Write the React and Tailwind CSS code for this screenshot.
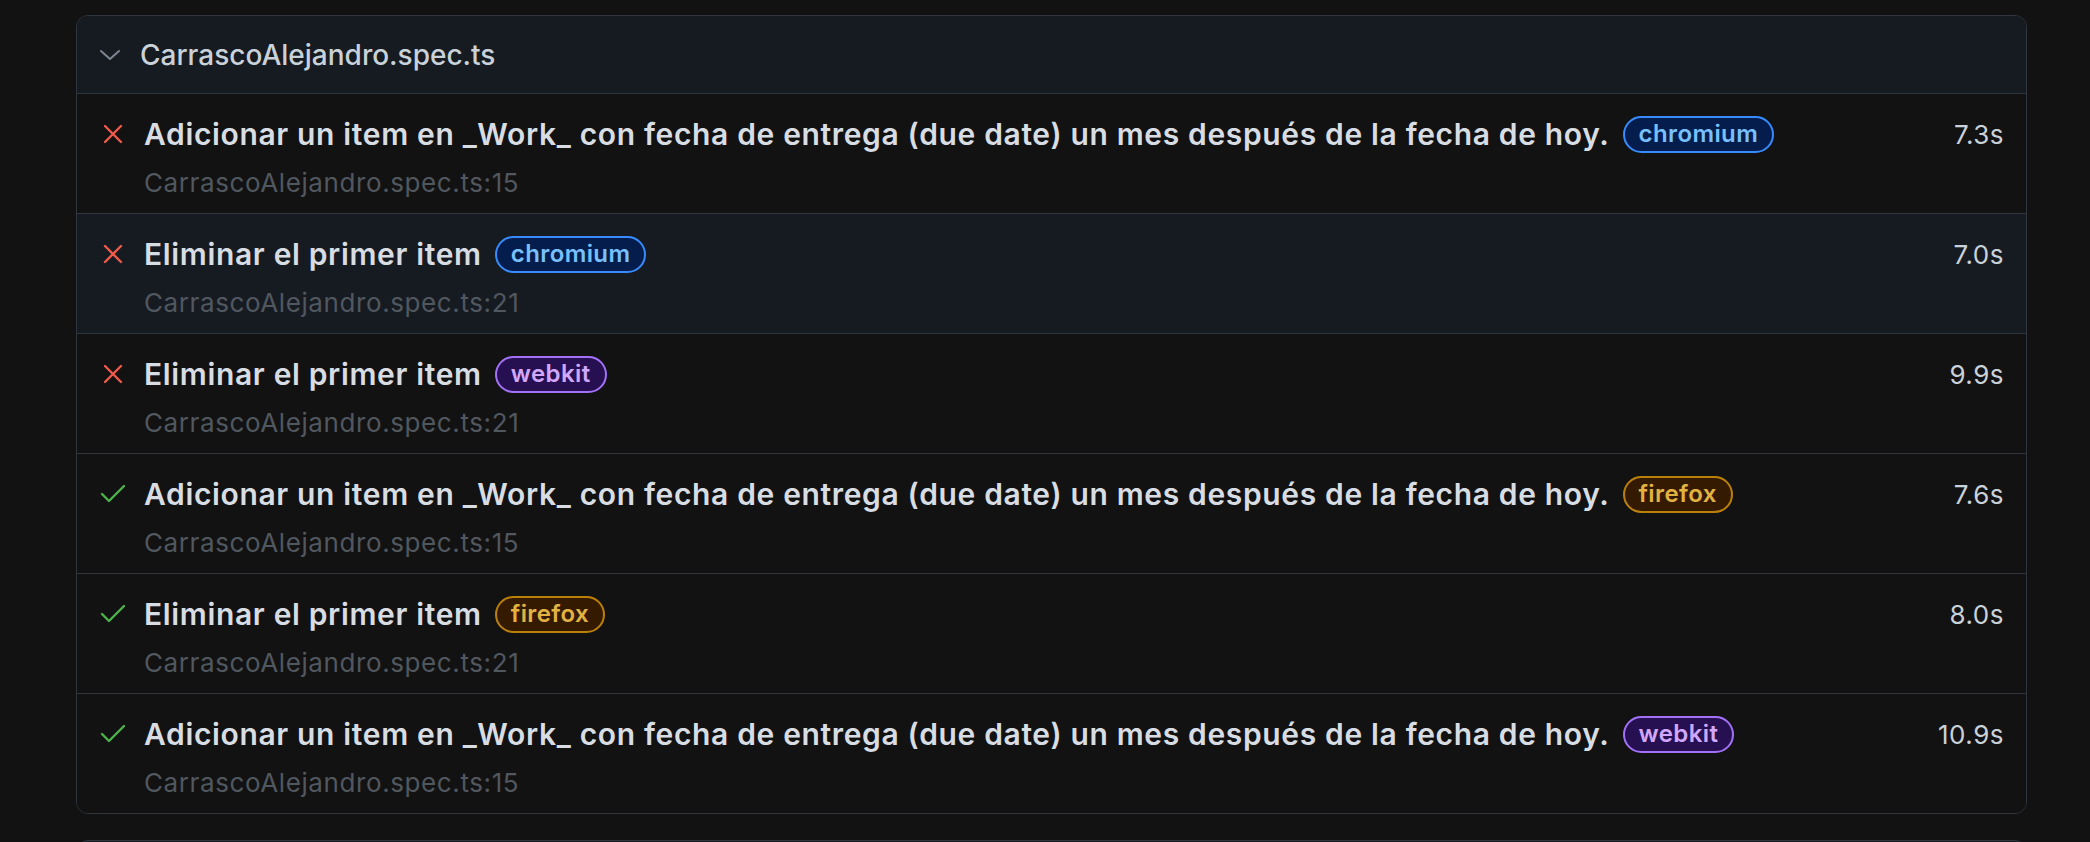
import React from "react";

const LONG =
  "Adicionar un item en _Work_ con fecha de entrega (due date) un mes después de la fecha de hoy.";

const rows = [
  { ok: false, title: LONG, badge: "chromium", line: 15, dur: "7.3s" },
  { ok: false, title: "Eliminar el primer item", badge: "chromium", line: 21, dur: "7.0s", hover: true },
  { ok: false, title: "Eliminar el primer item", badge: "webkit", line: 21, dur: "9.9s" },
  { ok: true, title: LONG, badge: "firefox", line: 15, dur: "7.6s" },
  { ok: true, title: "Eliminar el primer item", badge: "firefox", line: 21, dur: "8.0s" },
  { ok: true, title: LONG, badge: "webkit", line: 15, dur: "10.9s" },
];

const badgeClass = {
  chromium: "bg-[#051d4d] border-[#388bfd] text-[#79c0ff]",
  webkit: "bg-[#271052] border-[#a371f7] text-[#d2a8ff]",
  firefox: "bg-[#341a00] border-[#bb8009] text-[#e3b341]",
};

function XIcon() {
  return (
    <svg width="20" height="20" viewBox="0 0 20 20" className="ml-[3px]">
      <path d="M2 2 L18 18 M18 2 L2 18" stroke="#ef5a4a" strokeWidth="2.4" strokeLinecap="round" fill="none" />
    </svg>
  );
}

function CheckIcon() {
  return (
    <svg width="26" height="20" viewBox="0 0 26 20" className="ml-0">
      <path d="M2 10 L9 17 L24 2" stroke="#4cb34c" strokeWidth="2.4" strokeLinecap="round" strokeLinejoin="round" fill="none" />
    </svg>
  );
}

function Row({ r, first }) {
  return (
    <div
      className={
        (first ? "" : "border-t border-[#30363d] ") +
        (r.hover ? "bg-[#161b22] " : "bg-[#121212] ") +
        "h-[120px] flex flex-col pt-[18px] pl-[23px] pr-[22px]"
      }
      style={first ? { height: 119 } : undefined}
    >
      <div className="flex items-center h-[44px]">
        <div className="w-[44px] flex items-center shrink-0">{r.ok ? <CheckIcon /> : <XIcon />}</div>
        <span className="text-[30px] font-semibold text-[#d8dde3] whitespace-nowrap tracking-[0.65px]">
          {r.title}
        </span>
        <span
          className={
            badgeClass[r.badge] +
            " ml-[13px] h-[37px] px-[14px] rounded-full border-2 flex items-center text-[24px] font-semibold leading-none tracking-[0.4px]"
          }
        >
          {r.badge}
        </span>
        <span className="ml-auto text-[26px] text-[#c9d1d9] tracking-[0.5px]">{r.dur}</span>
      </div>
      <div className="pl-[44px] mt-[10px] h-[32px] flex items-center text-[26px] text-[#51575f] whitespace-nowrap tracking-[0.6px]">
        CarrascoAlejandro.spec.ts:{r.line}
      </div>
    </div>
  );
}

export default function App() {
  return (
    <div
      className="w-[2090px] h-[842px] overflow-hidden bg-[#121212] pt-[15px] pl-[76px] pr-[63px]"
      style={{ fontFamily: "Inter, 'Noto Sans', sans-serif" }}
    >
      <div className="rounded-[12px] border border-[#30363d] overflow-hidden">
        <div className="h-[78px] bg-[#161b22] border-b border-[#30363d] flex items-center pl-[22px]">
          <svg width="22" height="12" viewBox="0 0 22 12" className="shrink-0">
            <path d="M2 2 L11 10 L20 2" stroke="#7d8590" strokeWidth="2" strokeLinecap="round" strokeLinejoin="round" fill="none" />
          </svg>
          <span className="ml-[19px] text-[28px] font-medium text-[#c9d1d9]">CarrascoAlejandro.spec.ts</span>
        </div>
        {rows.map((r, i) => (
          <Row key={i} r={r} first={i === 0} />
        ))}
      </div>
      <div className="mt-[26px] rounded-[12px] border border-[#30363d] h-[80px] bg-[#161b22]" />
    </div>
  );
}
